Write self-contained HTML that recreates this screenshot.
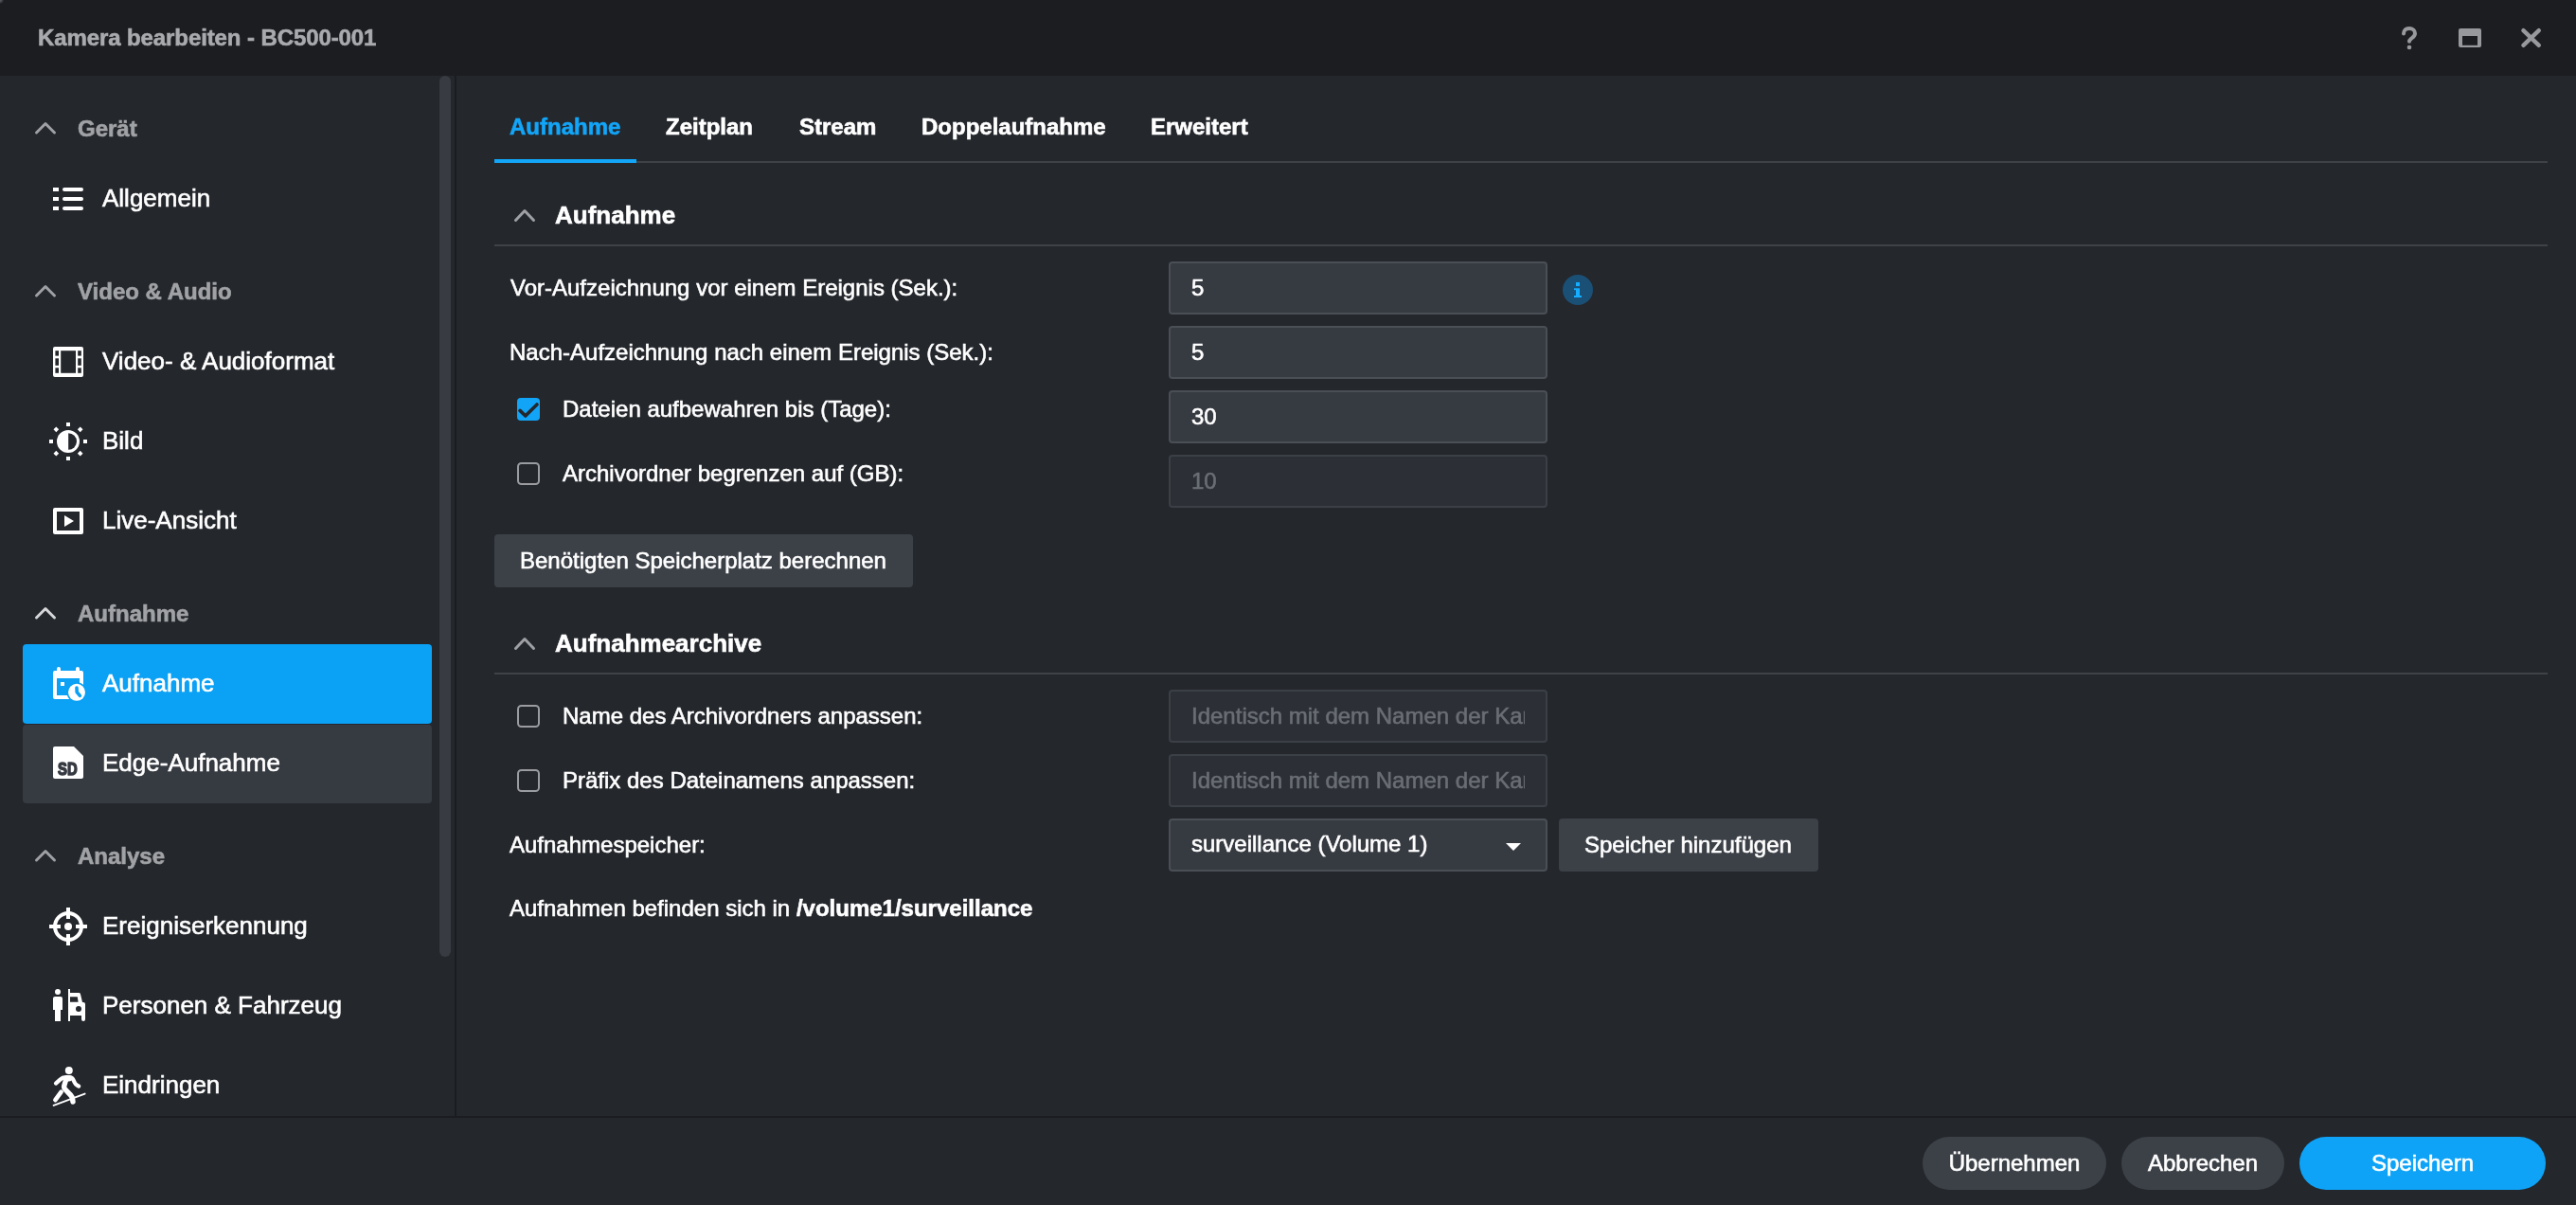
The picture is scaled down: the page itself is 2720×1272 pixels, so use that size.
<!DOCTYPE html>
<html><head><meta charset="utf-8">
<style>
*{margin:0;padding:0;box-sizing:border-box}
html,body{width:2720px;height:1272px;overflow:hidden;background:#24272c;font-family:"Liberation Sans",sans-serif}
.a{position:absolute}
.t{position:absolute;white-space:nowrap;line-height:1;-webkit-text-stroke:0.6px currentColor;will-change:transform}
#titlebar{left:0;top:0;width:2720px;height:80px;background:#1b1d21}
#title{left:40px;top:28px;font-size:24px;font-weight:bold;color:#a8aaad;letter-spacing:-0.1px}
#thumb{left:464px;top:80px;width:12px;height:930px;border-radius:6px;background:#383b41}
#vsep{left:480px;top:80px;width:2px;height:1098px;background:#1a1c20}
#hsep{left:0;top:1178px;width:2720px;height:2px;background:#1a1c20}
.hd{font-size:24px;font-weight:bold;color:#a0a2a5;left:82px}
.it{font-size:26px;color:#fff;left:108px}
.tab{font-size:24px;font-weight:bold;color:#fff;top:122px}
.sh{font-size:26px;font-weight:bold;color:#fff;left:586px}
.lb{font-size:24px;color:#fff}
.inp{left:1234px;width:400px;height:56px;border:2px solid #4a4e55;border-radius:4px;background:#363a41}
.dis{border-color:#3b3f46;background:#2c2f36}
.iv{font-size:24px;color:#fff}
.ph{color:#6a6e74}
.btn{background:#3c4148;border-radius:4px}
.pill{-webkit-text-stroke:0.6px #fff;will-change:transform;top:1200px;height:56px;border-radius:28px;background:#3c4148;color:#fff;font-size:24px;line-height:56px;text-align:center}
</style></head>
<body>
<div id="titlebar" class="a"></div>
<div class="a" style="left:0;top:0;width:6px;height:6px;background:radial-gradient(circle at 0 0,#5c6066 0,#4a4d52 1.6px,rgba(27,29,33,0) 4.2px)"></div>
<div id="title" class="t">Kamera bearbeiten - BC500-001</div>

<!-- sidebar -->
<div class="a" style="left:24px;top:680px;width:432px;height:84px;border-radius:4px;background:#0ba1f5"></div>
<div class="a" style="left:24px;top:765px;width:432px;height:83px;border-radius:4px;background:#363a41"></div>
<div id="thumb" class="a"></div>
<div id="vsep" class="a"></div>
<div id="hsep" class="a"></div>

<div class="t hd" style="top:124px">Gerät</div>
<div class="t it" style="top:196px">Allgemein</div>
<div class="t hd" style="top:296px">Video &amp; Audio</div>
<div class="t it" style="top:368px">Video- &amp; Audioformat</div>
<div class="t it" style="left:108px;top:452px">Bild</div>
<div class="t it" style="left:108px;top:536px">Live-Ansicht</div>
<div class="t hd" style="top:636px">Aufnahme</div>
<div class="t it" style="top:708px">Aufnahme</div>
<div class="t it" style="left:108px;top:792px">Edge-Aufnahme</div>
<div class="t hd" style="top:892px">Analyse</div>
<div class="t it" style="left:108px;top:964px">Ereigniserkennung</div>
<div class="t it" style="left:108px;top:1048px">Personen &amp; Fahrzeug</div>
<div class="t it" style="left:108px;top:1132px">Eindringen</div>

<!-- tabs -->
<div class="t tab" style="left:538px;color:#12a5f8">Aufnahme</div>
<div class="t tab" style="left:703px">Zeitplan</div>
<div class="t tab" style="left:844px">Stream</div>
<div class="t tab" style="left:973px">Doppelaufnahme</div>
<div class="t tab" style="left:1215px">Erweitert</div>
<div class="a" style="left:522px;top:170px;width:2168px;height:2px;background:#3f4247"></div>
<div class="a" style="left:522px;top:168px;width:150px;height:4px;background:#12a5f8"></div>

<!-- section 1 -->
<div class="t sh" style="top:214px">Aufnahme</div>
<div class="a" style="left:522px;top:258px;width:2168px;height:2px;background:#3f4247"></div>

<div class="t lb" style="left:539px;top:292px">Vor-Aufzeichnung vor einem Ereignis (Sek.):</div>
<div class="a inp" style="top:276px"></div>
<div class="t iv" style="left:1258px;top:292px">5</div>

<div class="t lb" style="left:538px;top:360px">Nach-Aufzeichnung nach einem Ereignis (Sek.):</div>
<div class="a inp" style="top:344px"></div>
<div class="t iv" style="left:1258px;top:360px">5</div>

<div class="t lb" style="left:594px;top:420px">Dateien aufbewahren bis (Tage):</div>
<div class="a inp" style="top:412px"></div>
<div class="t iv" style="left:1258px;top:428px">30</div>

<div class="t lb" style="left:594px;top:488px">Archivordner begrenzen auf (GB):</div>
<div class="a inp dis" style="top:480px"></div>
<div class="t iv ph" style="left:1258px;top:496px">10</div>

<div class="a btn" style="left:522px;top:564px;width:442px;height:56px"></div>
<div class="t lb" style="left:549px;top:580px">Benötigten Speicherplatz berechnen</div>

<!-- section 2 -->
<div class="t sh" style="top:666px">Aufnahmearchive</div>
<div class="a" style="left:522px;top:710px;width:2168px;height:2px;background:#3f4247"></div>

<div class="t lb" style="left:594px;top:744px">Name des Archivordners anpassen:</div>
<div class="a inp dis" style="top:728px;overflow:hidden"></div>
<div class="a" style="left:1236px;top:730px;width:374px;height:52px;overflow:hidden"><div class="t iv ph" style="left:22px;top:14px">Identisch mit dem Namen der Kamera</div></div>

<div class="t lb" style="left:594px;top:812px">Präfix des Dateinamens anpassen:</div>
<div class="a inp dis" style="top:796px"></div>
<div class="a" style="left:1236px;top:798px;width:374px;height:52px;overflow:hidden"><div class="t iv ph" style="left:22px;top:14px">Identisch mit dem Namen der Kamera</div></div>

<div class="t lb" style="left:538px;top:880px">Aufnahmespeicher:</div>
<div class="a inp" style="top:864px"></div>
<div class="t iv" style="left:1258px;top:879px">surveillance (Volume 1)</div>
<div class="a btn" style="left:1646px;top:864px;width:274px;height:56px"></div>
<div class="t lb" style="left:1673px;top:880px">Speicher hinzufügen</div>

<div class="t lb" style="left:538px;top:947px">Aufnahmen befinden sich in <b>/volume1/surveillance</b></div>

<!-- footer -->
<div class="a pill" style="left:2030px;width:194px">Übernehmen</div>
<div class="a pill" style="left:2240px;width:172px">Abbrechen</div>
<div class="a pill" style="left:2428px;width:260px;background:#0ea3f7">Speichern</div>

<svg class="a" style="left:0;top:0" width="2720" height="1272" viewBox="0 0 2720 1272">
<!-- window controls -->
<path d="M2538,35.6 C2538,31.6 2540.8,30 2544,30 C2547.4,30 2550,32.2 2550,35.2 C2550,38.2 2547.6,39.4 2546,40.8 C2544.6,42 2544,42.8 2544,43.8" fill="none" stroke="#97999c" stroke-width="4" stroke-linecap="round"/>
<circle cx="2544" cy="50" r="2.3" fill="#97999c"/>
<rect x="2596" y="30" width="24" height="20" rx="2" fill="#97999c"/>
<rect x="2600" y="38" width="16" height="9.8" fill="#1b1d21"/>
<path d="M2664.4,32.2 L2680.8,47.8 M2680.8,32.2 L2664.4,47.8" stroke="#97999c" stroke-width="4.4" stroke-linecap="round"/>

<!-- sidebar header chevrons -->
<g fill="none" stroke="#9ea0a4" stroke-width="3" stroke-linecap="round" stroke-linejoin="round">
<path d="M38.5,140 L48,130.5 L57.5,140"/>
<path d="M38.5,312 L48,302.5 L57.5,312"/>
<path d="M38.5,908 L48,898.5 L57.5,908"/>
<path d="M544.5,232.5 L554,222.5 L563.5,232.5"/>
<path d="M38.5,652 L48,642.5 L57.5,652" stroke="#d6d7d9"/>
<path d="M544.5,684.5 L554,674.5 L563.5,684.5"/>
</g>

<!-- list icon -->
<g fill="#fff">
<rect x="56" y="198" width="6" height="4"/><rect x="56" y="208" width="6" height="4"/><rect x="56" y="218" width="6" height="4"/>
<rect x="66" y="198" width="22" height="4" rx="2"/><rect x="66" y="208" width="22" height="4" rx="2"/><rect x="66" y="218" width="22" height="4" rx="2"/>
</g>

<!-- film icon -->
<rect x="56" y="366" width="32" height="32" rx="2" fill="#fff"/>
<g fill="#24272c">
<rect x="58.4" y="370.2" width="3.6" height="5.4"/><rect x="58.4" y="378.3" width="3.6" height="7.5"/><rect x="58.4" y="388.3" width="3.6" height="5.5"/>
<rect x="82.2" y="370.2" width="3.6" height="5.4"/><rect x="82.2" y="378.3" width="3.6" height="7.5"/><rect x="82.2" y="388.3" width="3.6" height="5.5"/>
<rect x="64.2" y="370.2" width="15.8" height="23.6"/>
</g>

<!-- brightness icon -->
<circle cx="72" cy="466" r="12" fill="#fff"/>
<path d="M72.2,457.2 A8.8,8.8 0 0 1 72.2,474.8 Z" fill="#24272c"/>
<g fill="#fff">
<rect x="70" y="446" width="4" height="4"/><rect x="70" y="482" width="4" height="4"/>
<rect x="52" y="464" width="4" height="4"/><rect x="88" y="464" width="4" height="4"/>
<rect x="-2" y="-2" width="4" height="4" transform="translate(59.3,453.3) rotate(45)"/>
<rect x="-2" y="-2" width="4" height="4" transform="translate(84.7,453.3) rotate(45)"/>
<rect x="-2" y="-2" width="4" height="4" transform="translate(59.3,478.7) rotate(45)"/>
<rect x="-2" y="-2" width="4" height="4" transform="translate(84.7,478.7) rotate(45)"/>
</g>

<!-- play icon -->
<rect x="56" y="536" width="32" height="28" rx="2" fill="#fff"/>
<rect x="60" y="540" width="24" height="20" fill="#24272c"/>
<path d="M68,544 L68,556 L78,550 Z" fill="#fff"/>

<!-- calendar icon -->
<g fill="#fff">
<rect x="60" y="704" width="4" height="8" rx="2"/><rect x="80" y="704" width="4" height="8" rx="2"/>
<rect x="56" y="708" width="32" height="30" rx="2"/>
</g>
<rect x="60" y="716" width="24" height="18" fill="#0ba1f5"/>
<rect x="64" y="720" width="4" height="4" fill="#fff"/>
<circle cx="81" cy="730.8" r="10.6" fill="#0ba1f5"/>
<circle cx="81" cy="730.8" r="9" fill="#fff"/>
<path d="M81,726 L81.2,730.6 L84.4,734.4" fill="none" stroke="#0ba1f5" stroke-width="3.6" stroke-linecap="round" stroke-linejoin="round"/>

<!-- SD icon -->
<path d="M58,788 L78,788 L88,798 L88,820 Q88,822 86,822 L58,822 Q56,822 56,820 L56,790 Q56,788 58,788 Z" fill="#fff"/>
<text x="61" y="817.6" font-family="Liberation Sans" font-weight="700" font-size="18.6" textLength="20.6" lengthAdjust="spacingAndGlyphs" fill="#363a41" stroke="#363a41" stroke-width="1.5" stroke-linejoin="round">SD</text>

<!-- crosshair icon -->
<circle cx="72" cy="978" r="14" fill="none" stroke="#fff" stroke-width="4"/>
<circle cx="72" cy="978" r="4" fill="#fff"/>
<g fill="#fff">
<rect x="70" y="958" width="4" height="12"/><rect x="70" y="986" width="4" height="12"/>
<rect x="52" y="976" width="12" height="4"/><rect x="80" y="976" width="12" height="4"/>
</g>

<!-- person & vehicle -->
<g fill="#fff">
<circle cx="61" cy="1047" r="3"/>
<path d="M58,1052 L64,1052 Q66,1052 66,1054 L66,1066 L56,1066 L56,1054 Q56,1052 58,1052 Z"/>
<rect x="58" y="1066" width="6" height="12"/>
<rect x="72" y="1044" width="2" height="34"/>
<path d="M74,1048 L83.3,1048 Q84.6,1048 85,1049.4 L87,1058 L88,1058 Q90,1058 90,1060 L90,1076 Q90,1078 88,1078 Q86,1078 86,1076 L86,1072 L74,1072 Z"/>
</g>
<path d="M74,1052.2 L81.8,1052.2 L82.6,1057.8 L74,1057.8 Z" fill="#24272c"/>
<circle cx="83" cy="1065" r="3" fill="#24272c"/>

<!-- walking / intrusion -->
<circle cx="72.8" cy="1130" r="4" fill="#fff"/>
<g fill="none" stroke="#fff" stroke-linecap="round" stroke-linejoin="round">
<path d="M59,1143.6 L63.5,1139.6 Q66,1137.4 69.5,1137.2 L73.5,1137 Q76,1137 77.2,1139.5 L79,1143.2 Q79.8,1144.8 81.4,1145.6 L83.2,1146.6" stroke-width="4.2"/>
<path d="M70,1138.6 L67.8,1146 Q67.2,1148.4 69,1150.2 L74.6,1156 Q76.4,1157.9 76.6,1160.4 L77,1163" stroke-width="5.4"/>
<path d="M70.5,1138.5 L73,1138.5" stroke-width="6"/>
<path d="M64.6,1152.6 L58.4,1161.2" stroke-width="4.6"/>
<path d="M56.6,1166.8 L89.6,1154.6" stroke-width="1.9"/>
</g>

<!-- info icon -->
<circle cx="1666" cy="306" r="16" fill="#1b5076"/>
<g fill="#14adff">
<rect x="1664" y="298" width="4" height="4"/>
<rect x="1664" y="304.3" width="4" height="9.7"/>
<rect x="1662" y="304.3" width="2" height="1.8"/>
<rect x="1662" y="312" width="8" height="2"/>
</g>

<!-- checkboxes -->
<rect x="546" y="420" width="24" height="24" rx="4" fill="#12a4f6"/>
<path d="M549,433.4 L554.8,439 L567,427" fill="none" stroke="#24272c" stroke-width="3.6" stroke-linecap="round" stroke-linejoin="round"/>
<g fill="none" stroke="#9a9ca0" stroke-width="2">
<rect x="547" y="489" width="22" height="22" rx="3.5"/>
<rect x="547" y="745" width="22" height="22" rx="3.5"/>
<rect x="547" y="813" width="22" height="22" rx="3.5"/>
</g>

<!-- dropdown arrow -->
<path d="M1590,890 L1606,890 L1598,898 Z" fill="#fff"/>
</svg>
</body></html>
